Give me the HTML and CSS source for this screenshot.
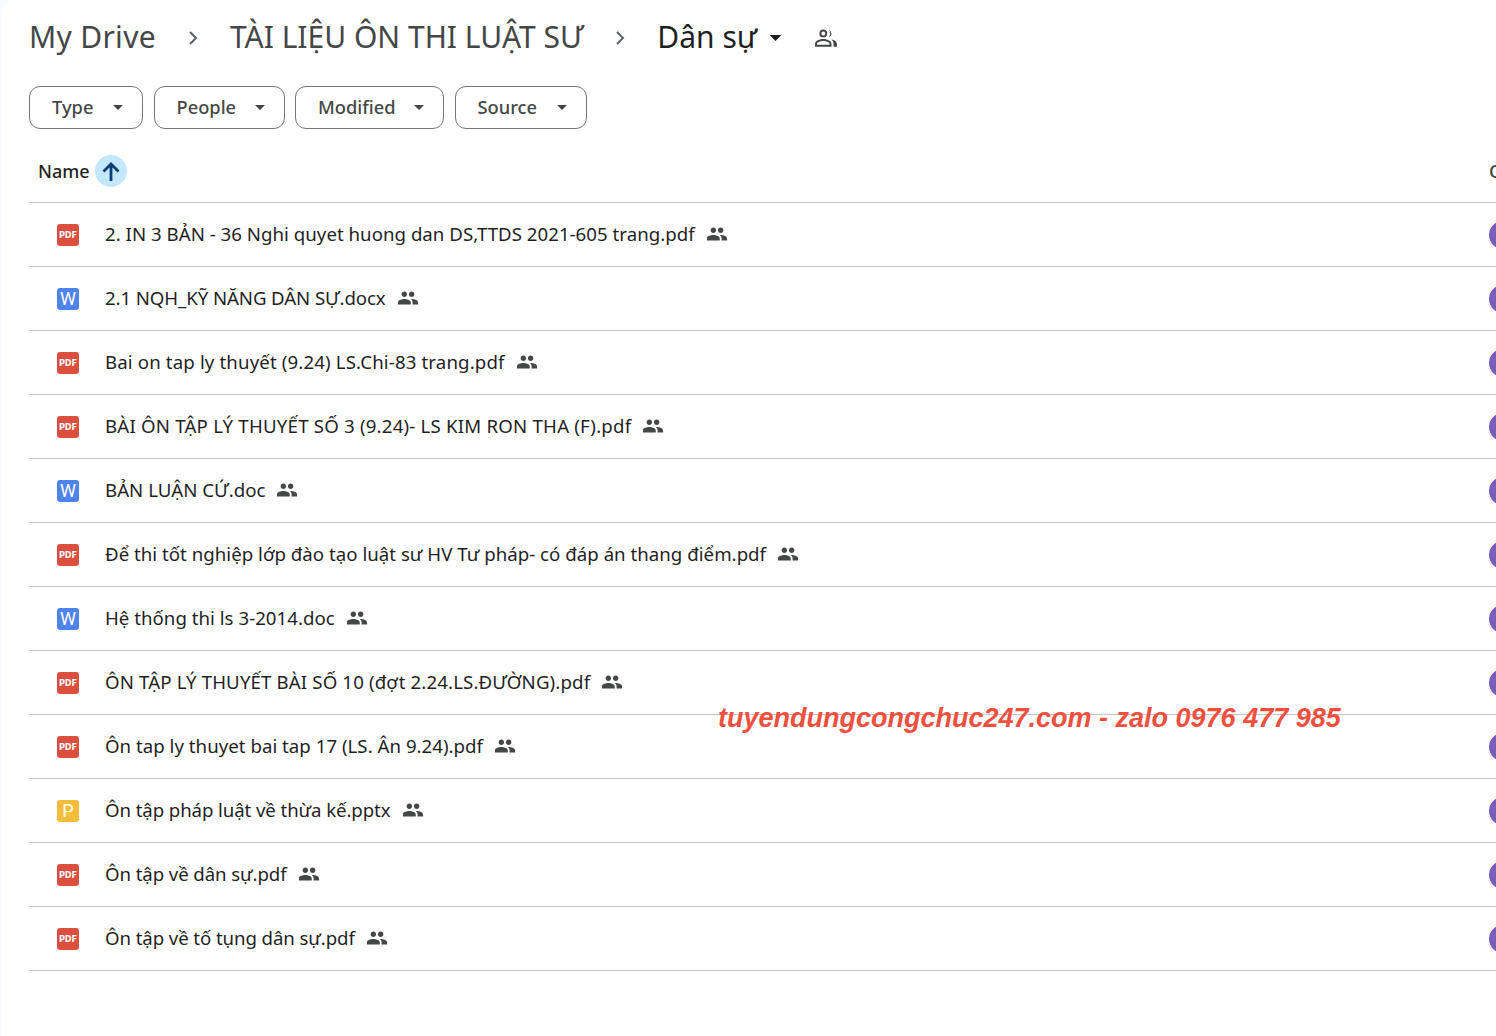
FILE: index.html
```html
<!DOCTYPE html>
<html lang="vi">
<head>
<meta charset="utf-8">
<title>Dân sự - Google Drive</title>
<link rel="stylesheet" href="styles.css">
</head>
<body>
<svg class="defs" width="0" height="0" aria-hidden="true">
  <symbol id="group" viewBox="0 0 24 24"><path d="M16 11c1.66 0 2.99-1.34 2.99-3S17.66 5 16 5c-1.66 0-3 1.34-3 3s1.34 3 3 3zm-8 0c1.66 0 2.99-1.34 2.99-3S9.66 5 8 5C6.34 5 5 6.34 5 8s1.34 3 3 3zm0 2c-2.33 0-7 1.17-7 3.5V19h14v-2.5c0-2.33-4.67-3.5-7-3.5zm8 0c-.29 0-.62.02-.97.05 1.16.84 1.97 1.97 1.97 3.45V19h6v-2.5c0-2.33-4.67-3.5-7-3.5z"/></symbol>
  <symbol id="caret" viewBox="0 0 10 5"><path d="M0 0h10L5 5z"/></symbol>
</svg>
<main class="page">
  <header class="crumbs">
    <span class="crumb crumb-first">My Drive</span>
    <svg class="chev" viewBox="0 0 10 16"><path d="M2 2l6 6-6 6"/></svg>
    <span class="crumb crumb-mid">TÀI LIỆU ÔN THI LUẬT SƯ</span>
    <svg class="chev" viewBox="0 0 10 16"><path d="M2 2l6 6-6 6"/></svg>
    <span class="crumb crumb-current">Dân sự</span>
    <svg class="caret-lg"><use href="#caret"/></svg>
    <svg class="people-outline" viewBox="0 0 24 24"><path d="M9.500 4.200a3.600 3.600 0 1 1 0 7.200 3.600 3.600 0 0 1 0-7.200zm0 1.800a1.800 1.800 0 1 0 0 3.600 1.800 1.800 0 0 0 0-3.600zM9.500 13c2.900 0 7.600 1.400 7.600 4.200V20H1.900v-2.800C1.900 14.400 6.600 13 9.500 13zm0 1.800c-2.500 0-5.800 1.200-5.800 2.400v1h11.600v-1c0-1.200-3.300-2.400-5.800-2.400zM14.600 4.400a3.600 3.600 0 0 1 0 6.800 5.600 5.600 0 0 0 0-6.800zM17 13.300c2.700.5 5.100 1.800 5.100 3.900V20h-3.200v-2.800c0-1.600-.8-2.900-1.900-3.900z"/></svg>
  </header>

  <div class="filters">
    <button class="chip chip-type"><span class="chip-label">Type</span><svg class="caret"><use href="#caret"/></svg></button>
    <button class="chip chip-people"><span class="chip-label">People</span><svg class="caret"><use href="#caret"/></svg></button>
    <button class="chip chip-modified"><span class="chip-label">Modified</span><svg class="caret"><use href="#caret"/></svg></button>
    <button class="chip chip-source"><span class="chip-label">Source</span><svg class="caret"><use href="#caret"/></svg></button>
  </div>

  <div class="list">
    <div class="list-head">
      <div class="head-name">
        <span>Name</span>
        <span class="sort"><svg viewBox="0 0 24 24"><path d="M12 22V5M4.500 12.500L12 5l7.500 7.500"/></svg></span>
      </div>
      <span class="head-owner">Owner</span>
    </div>

    <div class="row"><div class="name"><span class="ficon pdf">PDF</span><span class="fname">2. IN 3 BẢN - 36 Nghi quyet huong dan DS,TTDS 2021-605 trang.pdf</span><svg class="shared"><use href="#group"/></svg></div><span class="avatar"></span></div>
    <div class="row"><div class="name"><span class="ficon word">W</span><span class="fname tight">2.1 NQH_KỸ NĂNG DÂN SỰ.docx</span><svg class="shared"><use href="#group"/></svg></div><span class="avatar"></span></div>
    <div class="row"><div class="name"><span class="ficon pdf">PDF</span><span class="fname wide">Bai on tap ly thuyết (9.24) LS.Chi-83 trang.pdf</span><svg class="shared"><use href="#group"/></svg></div><span class="avatar"></span></div>
    <div class="row"><div class="name"><span class="ficon pdf">PDF</span><span class="fname wider">BÀI ÔN TẬP LÝ THUYẾT SỐ 3 (9.24)- LS KIM RON THA (F).pdf</span><svg class="shared"><use href="#group"/></svg></div><span class="avatar"></span></div>
    <div class="row"><div class="name"><span class="ficon word">W</span><span class="fname">BẢN LUẬN CỨ.doc</span><svg class="shared"><use href="#group"/></svg></div><span class="avatar"></span></div>
    <div class="row"><div class="name"><span class="ficon pdf">PDF</span><span class="fname">Để thi tốt nghiệp lớp đào tạo luật sư HV Tư pháp- có đáp án thang điểm.pdf</span><svg class="shared"><use href="#group"/></svg></div><span class="avatar"></span></div>
    <div class="row"><div class="name"><span class="ficon word">W</span><span class="fname">Hệ thống thi ls 3-2014.doc</span><svg class="shared"><use href="#group"/></svg></div><span class="avatar"></span></div>
    <div class="row"><div class="name"><span class="ficon pdf">PDF</span><span class="fname wide">ÔN TẬP LÝ THUYẾT BÀI SỐ 10 (đợt 2.24.LS.ĐƯỜNG).pdf</span><svg class="shared"><use href="#group"/></svg></div><span class="avatar"></span></div>
    <div class="row"><div class="name"><span class="ficon pdf">PDF</span><span class="fname">Ôn tap ly thuyet bai tap 17 (LS. Ân 9.24).pdf</span><svg class="shared"><use href="#group"/></svg></div><span class="avatar"></span></div>
    <div class="row"><div class="name"><span class="ficon ppt">P</span><span class="fname tight">Ôn tập pháp luật về thừa kế.pptx</span><svg class="shared"><use href="#group"/></svg></div><span class="avatar"></span></div>
    <div class="row"><div class="name"><span class="ficon pdf">PDF</span><span class="fname tight">Ôn tập về dân sự.pdf</span><svg class="shared"><use href="#group"/></svg></div><span class="avatar"></span></div>
    <div class="row"><div class="name"><span class="ficon pdf">PDF</span><span class="fname tight">Ôn tập về tố tụng dân sự.pdf</span><svg class="shared"><use href="#group"/></svg></div><span class="avatar"></span></div>
  </div>
</main>
<div class="watermark">tuyendungcongchuc247.com - zalo 0976 477 985</div>
</body>
</html>
```

FILE: styles.css
```css
* { box-sizing: border-box; }
html, body { margin: 0; height: 100%; overflow: hidden; background: #f8fafd; }
body { position: relative; width: 1496px; height: 1036px; font-family: "Noto Sans", Roboto, sans-serif; color: #1f1f1f; }
.defs { position: absolute; }
.page { height: 1036px; margin-left: 2px; padding-left: 27px; background: #fff; border-top-left-radius: 12px; }

.crumbs { display: flex; align-items: center; height: 74px; font-size: 30px; }
.crumb { white-space: nowrap; line-height: 40px; }
.crumb-first { color: #444746; letter-spacing: .3px; }
.crumb-mid { color: #444746; }
.crumb-current { color: #1f1f1f; }
.chev { flex: none; width: 10px; height: 16px; margin: 2px 32px 0 32px; fill: none; stroke: #5f6368; stroke-width: 2; }
.caret-lg { flex: none; width: 13px; height: 6px; margin: 2px 0 0 12px; fill: #1f1f1f; }
.people-outline { flex: none; width: 26px; height: 26px; margin: 2px 0 0 31px; fill: #444746; }

.filters { display: flex; gap: 10.5px; margin-top: 12px; }
.chip { display: flex; align-items: center; justify-content: space-between; height: 43px; padding: 0 19px 0 22px; border: 1px solid #747775; border-radius: 11px; background: #fff; color: #444746; font: 500 18.3px "Noto Sans", Roboto, sans-serif; }
.chip-label { padding-bottom: 2px; }
.chip-type { width: 114px; }
.chip-people { width: 131px; }
.chip-modified { width: 149px; }
.chip-source { width: 132px; }
.caret { flex: none; width: 10px; height: 5px; fill: #444746; }

.list-head { display: flex; align-items: center; height: 74px; padding-top: 10px; border-bottom: 1px solid #c7c7c7; }
.head-name { flex: 1; display: flex; align-items: center; gap: 5px; padding-left: 9px; font-size: 18px; font-weight: 500; }
.sort { width: 32px; height: 32px; border-radius: 50%; background: #c2e7ff; display: flex; align-items: center; justify-content: center; }
.sort svg { width: 24px; height: 24px; fill: none; stroke: #0b3d75; stroke-width: 2.800; }
.head-owner { flex: none; width: 7px; overflow: hidden; font-size: 18.67px; font-weight: 500; color: #444746; }

.row { display: flex; align-items: center; height: 64px; border-bottom: 1px solid #c7c7c7; }
.name { flex: 1; display: flex; align-items: center; padding-left: 28px; }
.ficon { flex: none; width: 22px; height: 22px; border-radius: 3px; display: flex; align-items: center; justify-content: center; color: #fff; }
.pdf { background: #d9503f; font: 700 9px "DejaVu Sans", sans-serif; font-stretch: condensed; }
.word { background: #4f83f1; font: 400 18px Roboto, sans-serif; }
.ppt { background: #f4bd3c; font: 400 18px Roboto, sans-serif; }
.fname { margin-left: 26px; padding-bottom: 2px; font-size: 18.67px; letter-spacing: .02px; white-space: nowrap; color: #1f1f1f; }
.tight { letter-spacing: -.1px; }
.wide { letter-spacing: .13px; }
.wider { letter-spacing: .2px; }
.shared { flex: none; width: 22px; height: 22px; margin: 0 0 1px 11px; fill: #444746; }
.avatar { flex: none; width: 28px; height: 28px; margin-right: -21px; border-radius: 50%; background: #7a5cbd; }

.watermark { position: absolute; left: 718px; top: 701px; font: italic 700 27px/34px "Liberation Sans", sans-serif; color: #f2503f; white-space: nowrap; }
```
